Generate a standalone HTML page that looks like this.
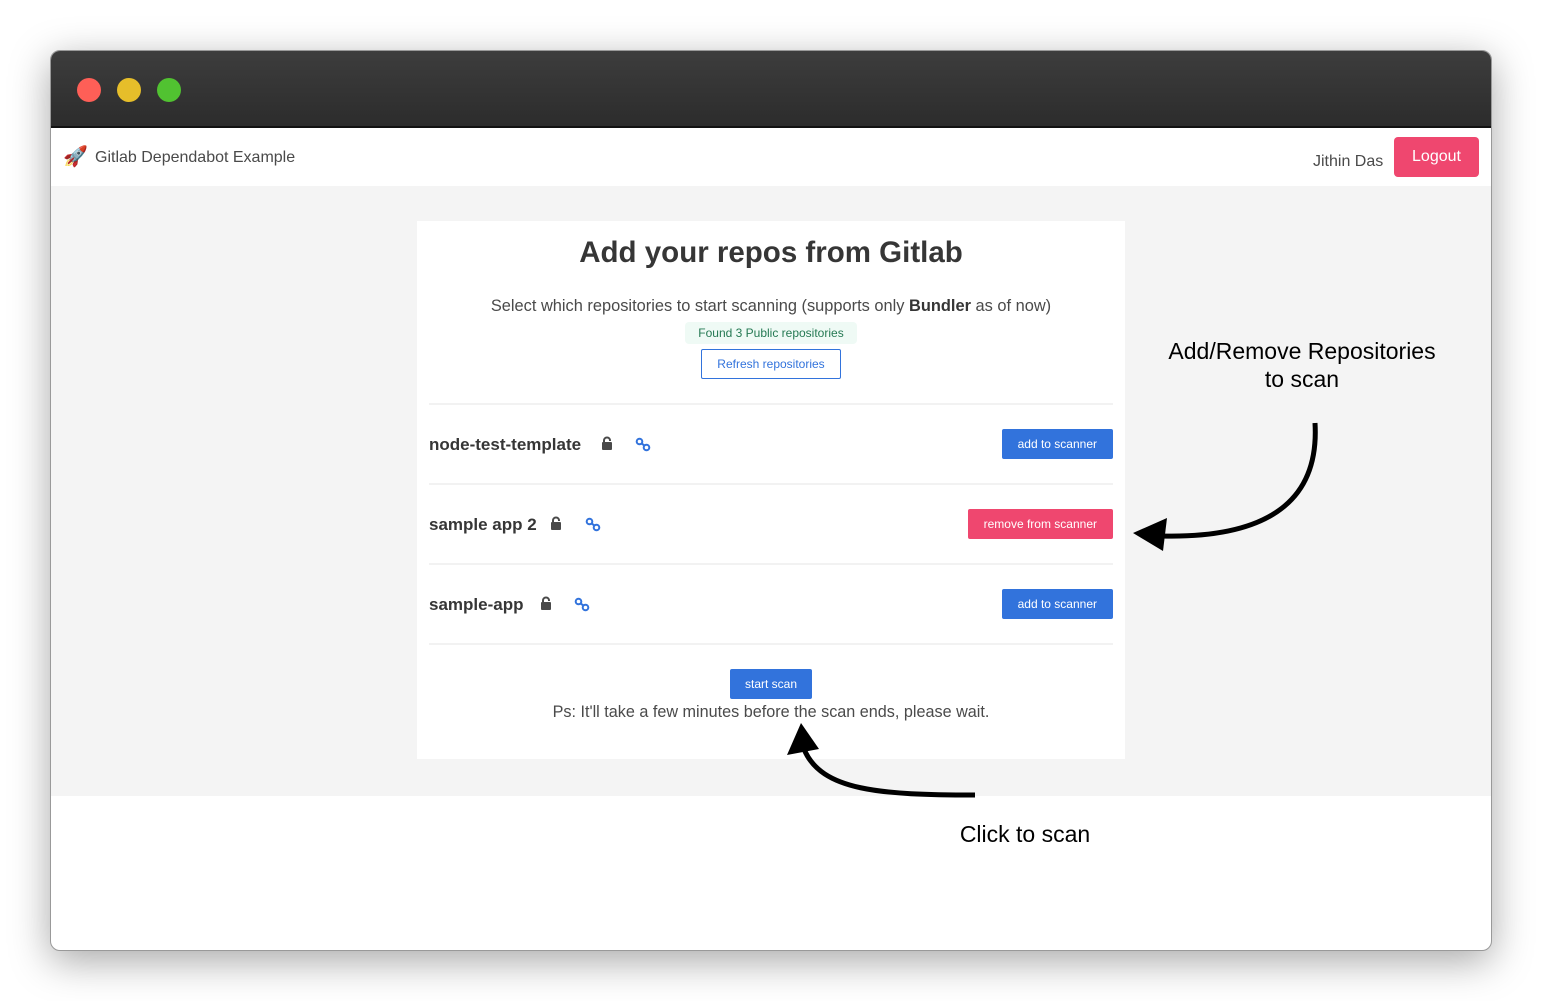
<!DOCTYPE html>
<html><head><meta charset="utf-8"><style>
*{margin:0;padding:0;box-sizing:border-box}
body{width:1542px;height:1001px;background:#fff;font-family:"Liberation Sans",sans-serif;position:relative;overflow:hidden}
.win{position:absolute;left:50px;top:50px;width:1442px;height:901px;border-radius:10px;overflow:hidden;box-shadow:0 10px 40px rgba(0,0,0,.35);border:1px solid #999;background:#fff}
.tb{height:77px;background:linear-gradient(#3d3d3d,#2c2c2c);border-bottom:2px solid #111;position:relative}
.dot{position:absolute;top:27px;width:24px;height:24px;border-radius:50%}
.nav{height:58px;background:#fff;position:relative}
.gray{position:absolute;left:0;top:135px;width:100%;height:610px;background:#f4f4f4}
.card{position:absolute;left:366px;top:170px;width:708px;height:538px;background:#fff}
h1{font-size:29.5px;font-weight:bold;color:#363636;text-align:center;margin-top:15px}
.row{position:absolute;left:12px;right:12px;height:80px;border-top:2px solid #f2f2f2}
.name{position:absolute;left:0;top:30px;font-size:17px;font-weight:bold;color:#363636}
.btn{position:absolute;right:0;top:24px;height:30px;line-height:30px;padding:0 16px;font-size:12px;color:#fff;border-radius:2px}
.blue{background:#3273dc}.pink{background:#ef476f}
</style></head><body>
<div class="win">
<div class="tb"><div class="dot" style="left:26px;background:#fe5f57"></div><div class="dot" style="left:66px;background:#e6be2a"></div><div class="dot" style="left:106px;background:#51c231"></div></div>
<div class="nav">
<div style="position:absolute;left:12px;top:16px;font-size:20px">🚀</div>
<div style="position:absolute;left:44px;top:21px;font-size:16px;color:#4a4a4a">Gitlab Dependabot Example</div>
<div style="position:absolute;left:1262px;top:25px;font-size:16px;color:#4a4a4a">Jithin Das</div>
<div style="position:absolute;left:1343px;top:9px;width:85px;height:40px;background:#ef476f;border-radius:4px;color:#fff;font-size:16px;text-align:center;line-height:40px">Logout</div>
</div>
<div class="gray"></div>
<div class="card">
<h1>Add your repos from Gitlab</h1>
<div style="text-align:center;font-size:16.4px;color:#4a4a4a;margin-top:27px">Select which repositories to start scanning (supports only <b style="color:#363636">Bundler</b> as of now)</div>
<div style="position:absolute;left:268px;top:101px;width:172px;height:22px;background:#effaf5;color:#257953;font-size:12px;text-align:center;line-height:22px;border-radius:4px">Found 3 Public repositories</div>
<div style="position:absolute;left:284px;top:128px;width:140px;height:30px;border:1px solid #3273dc;color:#3273dc;font-size:12px;text-align:center;line-height:28px;border-radius:2px">Refresh repositories</div>
<div class="row" style="top:182px"><div class="name">node-test-template</div><div class="btn blue">add to scanner</div></div>
<div class="row" style="top:262px"><div class="name">sample app 2</div><div class="btn pink">remove from scanner</div></div>
<div class="row" style="top:342px"><div class="name">sample-app</div><div class="btn blue">add to scanner</div></div>
<div class="row" style="top:422px;height:0"></div>
<div style="position:absolute;left:313px;top:448px;width:82px;height:30px;background:#3273dc;color:#fff;font-size:12px;text-align:center;line-height:30px;border-radius:2px">start scan</div>
<div style="position:absolute;left:0;right:0;top:482px;text-align:center;font-size:16.2px;color:#4a4a4a">Ps: It'll take a few minutes before the scan ends, please wait.</div>
</div>
<svg style="position:absolute;left:0;top:0" width="1442" height="901">
<defs>
<g id="lk"><rect x="0" y="5" width="10" height="8" rx="1" fill="#4a4a4a"/><path d="M2 5.5V3.5a3 3 0 0 1 6 0v0.5" fill="none" stroke="#4a4a4a" stroke-width="2"/></g>
<g id="ch" fill="none" stroke="#3273dc" stroke-width="2"><circle cx="3.5" cy="3.5" r="2.8"/><circle cx="10.5" cy="9.5" r="2.8"/><path d="M5.5 5.5l3 2"/></g>
</defs>
<use href="#lk" x="551" y="386"/><use href="#ch" x="585" y="387"/>
<use href="#lk" x="500" y="466"/><use href="#ch" x="535" y="467"/>
<use href="#lk" x="490" y="546"/><use href="#ch" x="524" y="547"/>
<path d="M1264 372 C1268 440 1230 488 1110 485" fill="none" stroke="#000" stroke-width="5"/>
<path d="M1082 482 L1116 467 L1112 500 Z" fill="#000"/>
<path d="M924 744 C830 744 770 740 753 698" fill="none" stroke="#000" stroke-width="5"/>
<path d="M750 672 L736 704 L768 698 Z" fill="#000"/>
<text x="1251" y="308" font-size="23" text-anchor="middle" font-family="Liberation Sans">Add/Remove Repositories</text>
<text x="1251" y="336" font-size="23" text-anchor="middle" font-family="Liberation Sans">to scan</text>
<text x="974" y="791" font-size="23" text-anchor="middle" font-family="Liberation Sans">Click to scan</text>
</svg>
</div>
</body></html>
